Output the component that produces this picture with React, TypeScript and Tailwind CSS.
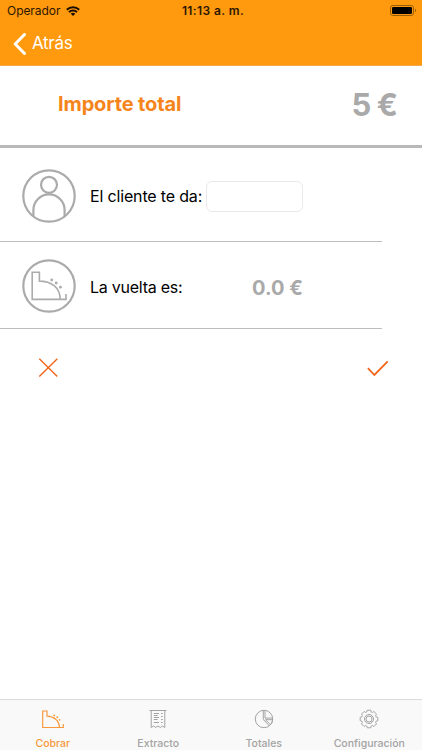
import { useState } from 'react'
import type { ReactNode } from 'react'

const tabs = [
  { id: 'cobrar', label: 'Cobrar', icon: <RegisterIcon /> },
  { id: 'extracto', label: 'Extracto', icon: <ReceiptIcon /> },
  { id: 'totales', label: 'Totales', icon: <PieIcon /> },
  { id: 'configuracion', label: 'Configuración', icon: <GearIcon /> },
]

export default function App() {
  return (
    <div className="flex h-[750px] w-full flex-col overflow-hidden bg-white font-[Inter,'Liberation_Sans',sans-serif] text-black">
      <Header />
      <ChangeForm />
      <TabBar />
    </div>
  )
}

function Header() {
  return (
    <header className="h-[66px] shrink-0 border-b border-[#f3a94a] bg-[#ff990d]">
      <div className="grid h-[22px] grid-cols-3 items-center pr-[5px] pl-[7px] text-[#2b1700]">
        <div className="flex items-center gap-[6px]">
          <span className="text-[12px] tracking-[-0.05px]">Operador</span>
          <svg width="14" height="10" viewBox="0 0 14 10" fill="none">
            <path
              d="M.8 3.7C4.3.3 9.7.3 13.2 3.7M3 6.1c2.2-2.2 5.8-2.2 8 0"
              stroke="#1a0e00"
              strokeWidth="2"
            />
            <path d="M4.7 7.7c1.3-1.2 3.3-1.2 4.6 0L7 10z" fill="#1a0e00" />
          </svg>
        </div>
        <span className="pl-[2px] text-center text-[12px] font-semibold whitespace-nowrap tracking-[0.4px]">
          11:13 a. m.
        </span>
        <svg
          className="justify-self-end"
          width="27"
          height="12"
          viewBox="0 0 27 12"
        >
          <rect
            x="0.5"
            y="0.5"
            width="23"
            height="10"
            rx="2.4"
            fill="none"
            stroke="#9c5d08"
          />
          <rect x="2" y="2" width="20" height="7" rx="1.2" fill="#000" />
          <path d="M25 3.8c1.6.5 1.6 2.9 0 3.4z" fill="#9c5d08" />
        </svg>
      </div>
      <button className="flex h-[43px] items-center pl-[13px] text-white">
        <svg width="13" height="22" viewBox="0 0 13 22" fill="none">
          <path
            d="M11.5 1.5 2.2 11l9.3 9.5"
            stroke="currentColor"
            strokeWidth="3"
            strokeLinecap="round"
            strokeLinejoin="round"
          />
        </svg>
        <span className="ml-[6px] text-[17px] tracking-[-0.3px]">Atrás</span>
      </button>
    </header>
  )
}

function ChangeForm() {
  const [given, setGiven] = useState('')

  return (
    <main className="flex-1">
      <div className="flex h-[82px] items-center justify-between border-b-[3px] border-[#b9b9b9] pr-[25px] pl-[58px]">
        <h1 className="pb-[3px] text-[20px] font-bold tracking-[-0.12px] text-[#f5851b]">
          Importe total
        </h1>
        <span className="text-[31px] font-bold tracking-[-1px] text-[#a9a9a9]">
          5 €
        </span>
      </div>
      <FormRow className="h-[94px] pt-[3px]" icon={<PersonIcon />}>
        <label
          htmlFor="given"
          className="w-[112px] text-[16px] tracking-[-0.16px]"
        >
          El cliente te da:
        </label>
        <input
          id="given"
          value={given}
          onChange={(e) => setGiven(e.target.value)}
          className="ml-[4px] h-[31px] w-[97px] rounded-[6px] border border-[#e9e9e9] px-2 outline-none"
        />
      </FormRow>
      <FormRow className="h-[87px] pt-[2px]" icon={<RegisterBadge />}>
        <span className="w-[162px] pt-[1px] text-[16px] tracking-[-0.25px]">
          La vuelta es:
        </span>
        <span className="pt-[4px] text-[20px] font-bold text-[#a9a9a9]">
          0.0 €
        </span>
      </FormRow>
      <div className="flex items-center justify-between pt-[28px] pr-[33px] pl-[38px] text-[#f0651a]">
        <button title="Cancelar">
          <svg width="21" height="21" viewBox="0 0 21 21" fill="none">
            <path
              d="m1.3 1.8 18 17.6m0-17.6-18 17.6"
              stroke="currentColor"
              strokeWidth="1.4"
            />
          </svg>
        </button>
        <button title="Aceptar">
          <svg width="22" height="21" viewBox="0 0 22 21" fill="none">
            <path
              d="m.9 11.2 6.5 6.8L20.7 4.3"
              stroke="currentColor"
              strokeWidth="1.8"
            />
          </svg>
        </button>
      </div>
    </main>
  )
}

function FormRow({
  icon,
  className,
  children,
}: {
  icon: ReactNode
  className: string
  children: ReactNode
}) {
  return (
    <div
      className={`flex w-[382px] items-center border-b border-[#bdbdbd] pl-[22px] ${className}`}
    >
      {icon}
      <div className="ml-[14px] flex items-center whitespace-nowrap">
        {children}
      </div>
    </div>
  )
}

function TabBar() {
  const [active, setActive] = useState('cobrar')

  return (
    <nav className="grid h-[51px] shrink-0 grid-cols-4 border-t border-[#d9d9d9] bg-[#f9f9f9]">
      {tabs.map((tab) => (
        <button
          key={tab.id}
          onClick={() => setActive(tab.id)}
          className={`flex flex-col items-center pt-[7px] ${
            tab.id === active ? 'text-[#f7983c]' : 'text-[#a3a3a3]'
          }`}
        >
          {tab.icon}
          <span className="mt-[6px] text-[10.5px] leading-[14px] font-medium whitespace-nowrap">
            {tab.label}
          </span>
        </button>
      ))}
    </nav>
  )
}

function PersonIcon() {
  return (
    <svg width="54" height="54" viewBox="0 0 54 54" fill="none">
      <g stroke="#ababab" strokeWidth="2.2">
        <circle cx="27" cy="27" r="25.7" />
        <circle cx="27" cy="15.8" r="8" />
        <path d="M11.4 47V41a15.6 15.6 0 0 1 31.2 0v6" />
      </g>
    </svg>
  )
}

function RegisterBadge() {
  return (
    <svg width="54" height="54" viewBox="0 0 54 54" fill="none">
      <circle cx="27" cy="27" r="25.7" stroke="#ababab" strokeWidth="2.2" />
      <path
        d="M44 35v5.4H10.2V13.3h7.2v8.8c11.5 0 20.8 6 20.8 18.3"
        stroke="#ababab"
        strokeWidth="1.6"
      />
      <g fill="#ababab">
        <circle cx="29.7" cy="21" r="1.4" />
        <circle cx="34.2" cy="24" r="1.4" />
        <circle cx="38.4" cy="28.2" r="1.4" />
      </g>
    </svg>
  )
}

function RegisterIcon() {
  return (
    <svg width="24" height="24" viewBox="0 0 24 24" fill="none">
      <path
        d="M22.3 17v3.5H1.7V4H6v5.1c6.8.2 12.2 4.2 12.5 11.4"
        stroke="currentColor"
        strokeWidth="1.2"
      />
      <g fill="currentColor">
        <circle cx="13.3" cy="8.4" r="0.9" />
        <circle cx="16.2" cy="10.2" r="0.9" />
        <circle cx="18.6" cy="12.8" r="0.9" />
      </g>
    </svg>
  )
}

function ReceiptIcon() {
  return (
    <svg width="24" height="24" viewBox="0 0 24 24" fill="none">
      <g stroke="currentColor">
        <path d="M3.5 3.5h17M5.2 3.5v17L7.500 19l2.200 1.500L12 19l2.300 1.500 2.200-1.500 2.300 1.500v-17" />
        <path d="M7.800 6.500H13M7.800 8.500h3.800M7.800 10.500H13M7.800 12.500h3.800M7.800 15.500H13" />
        <path d="M15 6.500h1.700M15 9.500h1.700M15 12.500h1.700M15 15.500h1.700" />
      </g>
    </svg>
  )
}

function PieIcon() {
  return (
    <svg width="24" height="24" viewBox="0 0 24 24" fill="none">
      <g stroke="currentColor">
        <circle cx="12" cy="12" r="8.7" />
        <path d="M11.3 3.3v9.2l6 6.3M13 3.4v7.7h7.6M13.4 12.700h7.200c-.2 2-.9 3.600-2.200 5z" />
      </g>
    </svg>
  )
}

function GearIcon() {
  return (
    <svg width="24" height="24" viewBox="0 0 24 24" fill="none">
      <g stroke="currentColor" strokeLinejoin="round">
        <path d="M10.300 3.200h3.400l.5 1.700 1.200.5 1.500-.9 2.600 2.600-.9 1.500.5 1.200 1.700.5v3.400l-1.700.5-.5 1.200.9 1.500-2.600 2.600-1.500-.9-1.200.5-.5 1.700h-3.400l-.5-1.700-1.200-.5-1.500.9-2.600-2.600.9-1.500-.5-1.200-1.700-.5v-3.400l1.700-.5.5-1.200-.9-1.500 2.600-2.600 1.500.9 1.200-.5z" />
        <circle cx="12" cy="12" r="4.500" />
        <circle cx="12" cy="12" r="3" />
      </g>
    </svg>
  )
}
